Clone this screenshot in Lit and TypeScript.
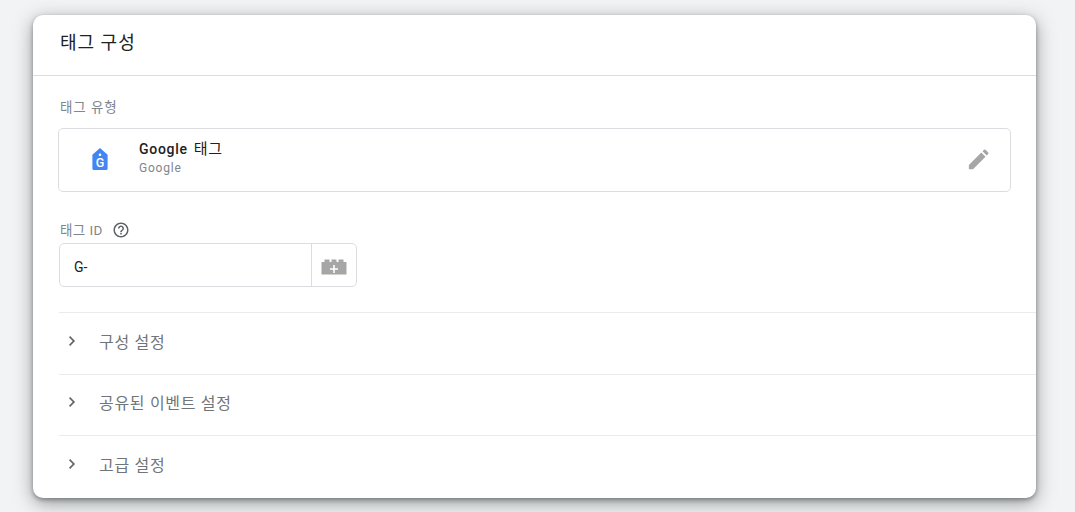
import {LitElement, html, css, svg} from 'lit';
import {customElement} from 'lit/decorators.js';

const chevron = svg`<path d="M1.4 0 0 1.4 4.6 6 0 10.6 1.4 12l6-6z" fill="#5f6368"/>`;

@customElement('app-root')
export class AppRoot extends LitElement {
    static override styles = css`
      :host {
        display: block;
        min-height: 512px;
        box-sizing: border-box;
        padding: 15px 39px 14px 33px;
        background: #f1f3f4;
        font-family: Roboto, 'Noto Sans CJK KR', sans-serif;
        overflow: hidden;
      }
      .card {
        height: 483px;
        box-sizing: border-box;
        background: #fff;
        border-radius: 10px;
        box-shadow: 0 5px 18px rgba(60, 64, 67, 0.5), 0 2px 4px rgba(60, 64, 67, 0.45);
        overflow: hidden;
      }
      .title {
        height: 61px;
        box-sizing: border-box;
        padding: 13px 0 0 27px;
        border-bottom: 1px solid #dadce0;
        font-size: 18px;
        letter-spacing: 1px;
        line-height: 30px;
        color: #202124;
      }
      .body {
        padding: 21px 0 0 25px;
      }
      .label {
        padding-left: 2px;
        font-size: 13.5px;
        letter-spacing: 0.9px;
        line-height: 20px;
        color: #80868b;
      }
      .type-box {
        margin: 11px 25px 0 0;
        height: 64px;
        box-sizing: border-box;
        border: 1px solid #dadce0;
        border-radius: 5px;
        display: flex;
        align-items: center;
        padding-left: 31px;
      }
      .tag-icon {
        width: 20px;
        height: 24px;
        margin: 0 29px 2px 0;
        flex: none;
      }
      .type-text {
        flex: 1;
        padding-bottom: 3px;
      }
      .type-name {
        font-size: 14px;
        font-weight: 500;
        letter-spacing: 0.7px;
        line-height: 19px;
        color: #202124;
      }
      .type-name span {
        font-size: 15px;
        font-weight: 400;
        margin-left: 2px;
      }
      .type-sub {
        font-size: 12px;
        letter-spacing: 0.8px;
        line-height: 19px;
        color: #80868b;
      }
      .edit {
        width: 21px;
        height: 21px;
        margin: 0 21px 2px 0;
        flex: none;
      }
      .id-label {
        margin-top: 28px;
        display: flex;
        align-items: center;
        gap: 9px;
        padding-left: 2px;
        font-size: 13.5px;
        letter-spacing: 0.4px;
        line-height: 20px;
        color: #80868b;
      }
      .help {
        width: 18px;
        height: 18px;
        display: block;
      }
      .input {
        margin: 3px 0 0 1px;
        width: 298px;
        height: 44px;
        box-sizing: border-box;
        border: 1px solid #dadce0;
        border-radius: 5px;
        display: flex;
      }
      .value {
        flex: 1;
        padding-left: 14px;
        font-size: 14px;
        line-height: 46px;
        height: 42px;
        color: #202124;
      }
      .picker {
        width: 44px;
        flex: none;
        border-left: 1px solid #dadce0;
        display: flex;
        align-items: center;
        justify-content: center;
      }
      .picker svg {
        margin-top: 3px;
      }
      .rows {
        margin: 25px 0 0 1px;
      }
      .row {
        height: 61.5px;
        box-sizing: border-box;
        border-top: 1px solid #e8eaed;
        display: flex;
        align-items: center;
        padding: 0 0 4px 10px;
        font-size: 16px;
        letter-spacing: 0.7px;
        color: #70757a;
      }
      .row:nth-child(2) {
        padding-bottom: 6px;
      }
      .row svg {
        width: 6.5px;
        height: 10px;
        margin-right: 23.5px;
        flex: none;
      }
    `;

    private rows = ['구성 설정', '공유된 이벤트 설정', '고급 설정'];

    override render() {
        return html`
            <div class="card">
                <div class="title">태그 구성</div>
                <div class="body">
                    <div class="label">태그 유형</div>
                    <div class="type-box">
                        <svg class="tag-icon" viewBox="0 0 20 24">
                            <path fill="#4285f4" d="M10 1 17.6 7.800V21.500a1.500 1.500 0 0 1-1.500 1.500H3.900a1.500 1.500 0 0 1-1.500-1.500V7.800z"/>
                            <circle cx="10" cy="7.800" r="1.300" fill="#fff"/>
                            <text x="10" y="20" text-anchor="middle" font-family="Roboto, sans-serif" font-size="12.500" font-weight="500" fill="#fff">G</text>
                        </svg>
                        <div class="type-text">
                            <div class="type-name">Google <span>태그</span></div>
                            <div class="type-sub">Google</div>
                        </div>
                        <svg class="edit" viewBox="0 0 24 24">
                            <path fill="#a6a6a6" d="M1 23v-4.800L15.200 4l4.800 4.800L5.800 23zM16.600 2.600l1.700-1.700a1.300 1.300 0 0 1 1.800 0l3 3a1.300 1.300 0 0 1 0 1.800l-1.700 1.700z"/>
                        </svg>
                    </div>
                    <div class="id-label">
                        태그 ID
                        <svg class="help" viewBox="0 0 24 24">
                            <path fill="#5f6368" d="M11 18h2v-2h-2v2zm1-16C6.480 2 2 6.480 2 12s4.480 10 10 10 10-4.480 10-10S17.520 2 12 2zm0 18c-4.410 0-8-3.590-8-8s3.590-8 8-8 8 3.590 8 8-3.590 8-8 8zm0-14c-2.210 0-4 1.790-4 4h2c0-1.100.9-2 2-2s2 .9 2 2c0 2-3 1.750-3 5h2c0-2.250 3-2.500 3-5 0-2.210-1.790-4-4-4z"/>
                        </svg>
                    </div>
                    <div class="input">
                        <div class="value">G-</div>
                        <div class="picker">
                            <svg width="26" height="16" viewBox="0 0 26 16">
                                <path fill="#a6a6a6" d="M0.500 15.500V3h3V0.500h5V3h2V0.500h5V3h2V0.500h5V3h3v12.500z"/>
                                <path fill="#fff" d="M12.200 6h1.600v3.200h3.200v1.600h-3.200V14h-1.600v-3.200H9V9.200h3.200z"/>
                            </svg>
                        </div>
                    </div>
                    <div class="rows">
                        ${this.rows.map(r => html`
                            <div class="row">
                                <svg viewBox="0 0 8 12" preserveAspectRatio="none">${chevron}</svg>
                                ${r}
                            </div>
                        `)}
                    </div>
                </div>
            </div>
    `;
    }
}

declare global {
    interface HTMLElementTagNameMap {
        'app-root': AppRoot;
    }
}
